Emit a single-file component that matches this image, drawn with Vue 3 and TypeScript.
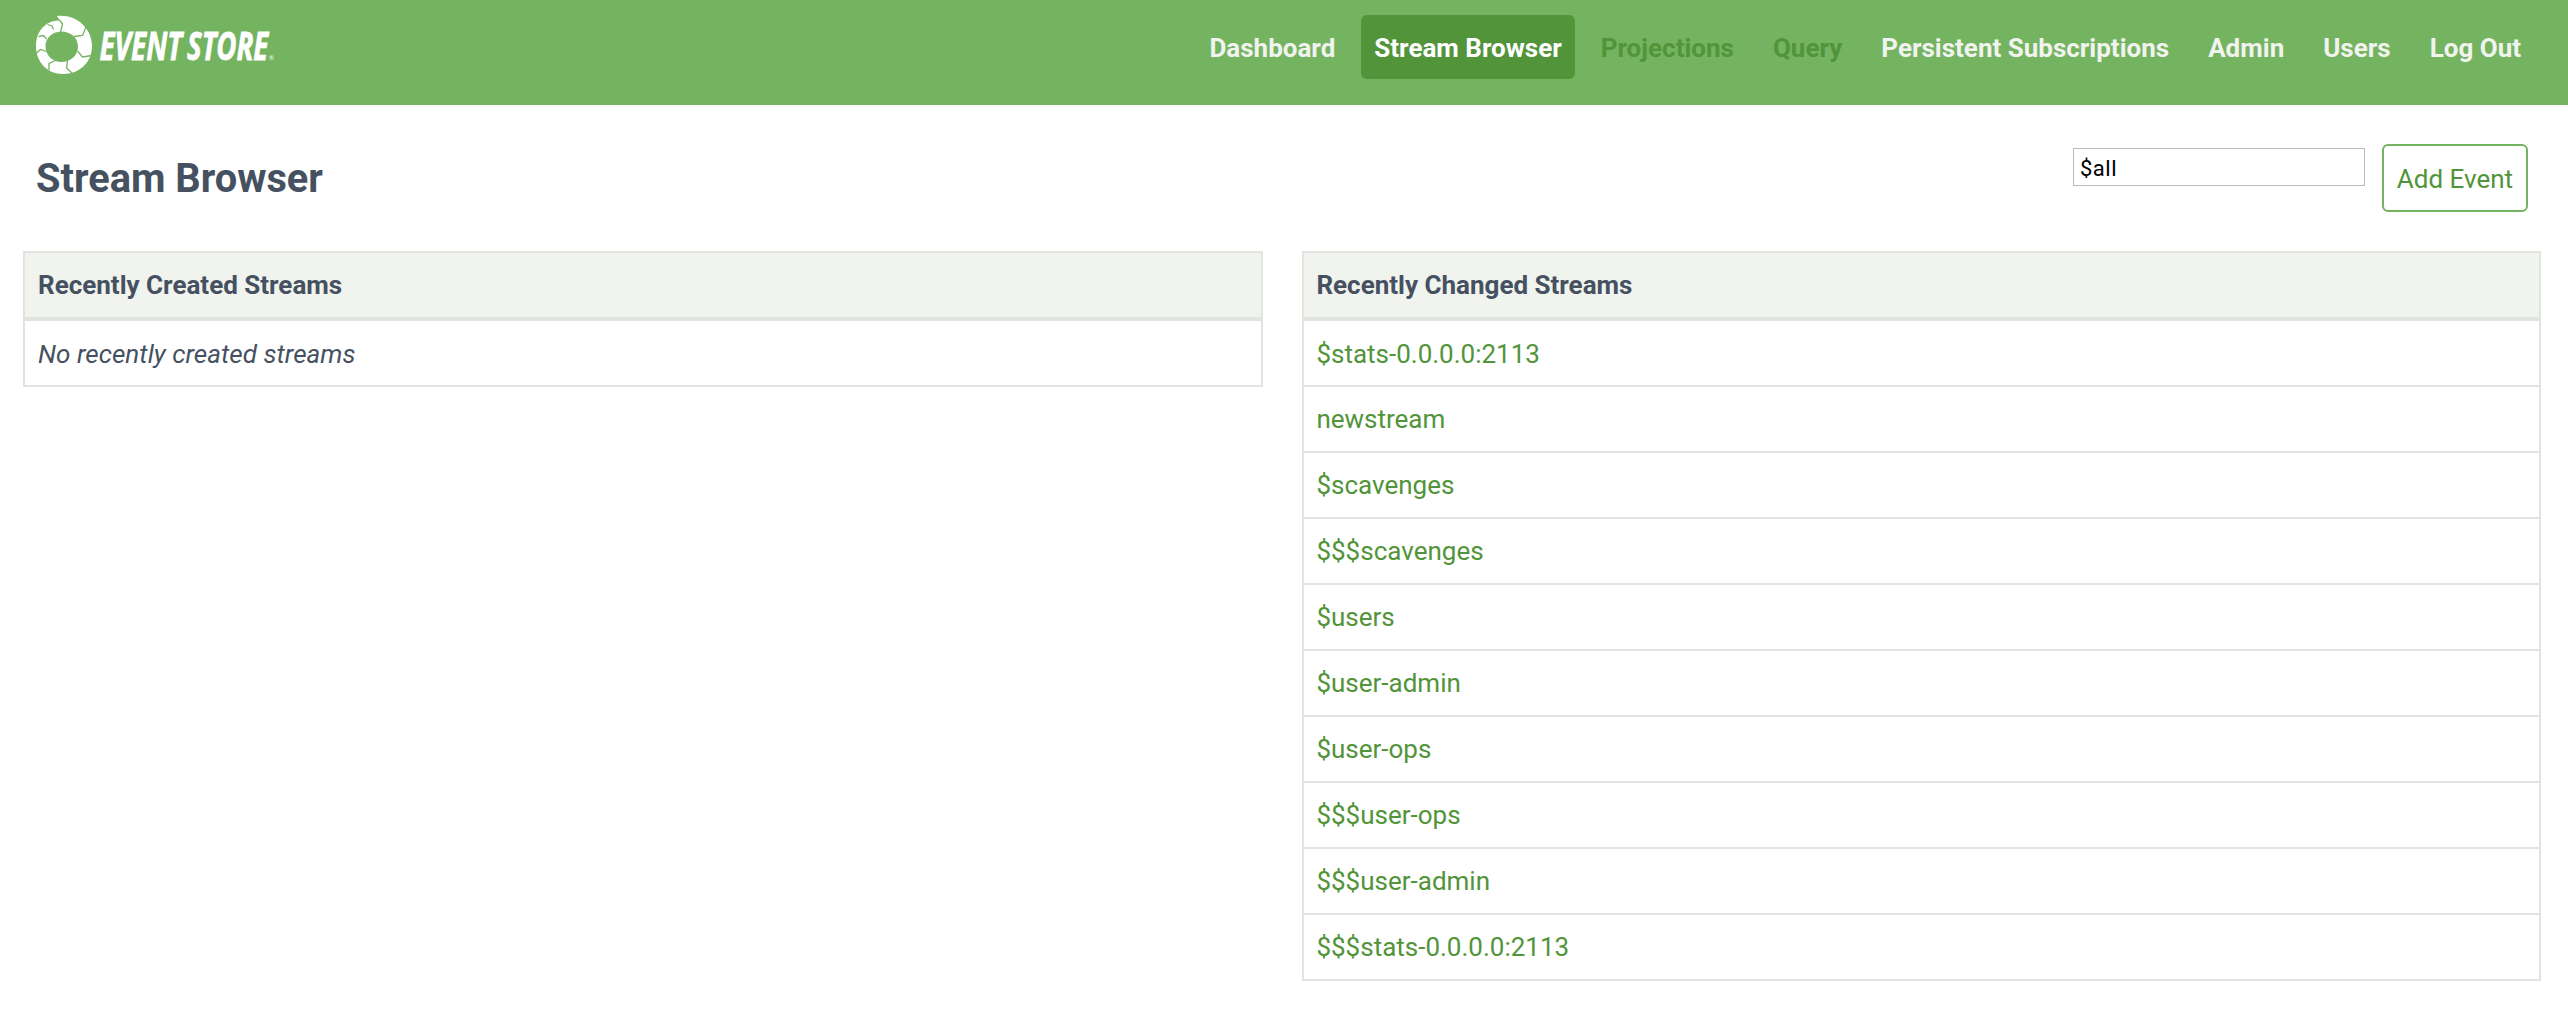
<script setup lang="ts">
interface NavItem {
  label: string
  state?: 'active' | 'disabled'
}

const nav: NavItem[] = [
  { label: 'Dashboard' },
  { label: 'Stream Browser', state: 'active' },
  { label: 'Projections', state: 'disabled' },
  { label: 'Query', state: 'disabled' },
  { label: 'Persistent Subscriptions' },
  { label: 'Admin' },
  { label: 'Users' },
  { label: 'Log Out' },
]

const changed: string[] = [
  '$stats-0.0.0.0:2113',
  'newstream',
  '$scavenges',
  '$$$scavenges',
  '$users',
  '$user-admin',
  '$user-ops',
  '$$$user-ops',
  '$$$user-admin',
  '$$$stats-0.0.0.0:2113',
]
</script>

<template>
  <div class="page">
    <header class="header">
      <svg class="logo" width="250" height="66" viewBox="30 10 250 66" aria-label="Event Store">
        <path
          fill="#fff"
          fill-rule="evenodd"
          d="M57 16 C76 14 92 28 92 46 C92 62 80 74 63 74 C47 74 36 62 36 46 C36 31 46 20 60 20.500 Z M61 31.500 C52 32 45.500 38 45.500 46 C45.500 55 52 62 61.500 62 C71 62 78 55 78 46.500 C78 38 71 31.500 61 31.500 Z"
        />
        <g fill="none" stroke="#74b360" stroke-width="1.300">
          <path d="M59.500 20 L62.500 24 L60.500 32" />
          <path d="M86 27 L82.500 35.500 L74 36.500" />
          <path d="M92 55.500 L82.500 57 L77.500 51" />
          <path d="M72 73 L66.500 68 L67.500 61" />
          <path d="M49 70 L49 63.500 L55.500 60.500" />
          <path d="M36.500 53 L40.500 49.500 L46.500 51.500" />
          <path d="M38.500 36.500 L43.500 35.500 L46.500 39" />
          <path d="M47.500 24.500 L52 26 L53.500 29.500" />
        </g>
        <g class="wordmark">
          <text transform="translate(99.500 60) scale(0.650 1)" textLength="127" lengthAdjust="spacingAndGlyphs">EVENT</text>
          <text transform="translate(187 60) scale(0.650 1)" textLength="125" lengthAdjust="spacingAndGlyphs">STORE</text>
        </g>
        <text class="reg" x="269" y="60">®</text>
      </svg>
      <nav class="nav">
        <a v-for="item in nav" :key="item.label" class="nav-item" :class="item.state">{{ item.label }}</a>
      </nav>
    </header>

    <section class="title-bar">
      <h1>Stream Browser</h1>
      <div class="actions">
        <input class="stream-input" type="text" value="$all" />
        <a class="button">Add Event</a>
      </div>
    </section>

    <main class="columns">
      <section class="panel created">
        <div class="panel-head">Recently Created Streams</div>
        <div class="row empty">No recently created streams</div>
      </section>
      <section class="panel changed">
        <div class="panel-head">Recently Changed Streams</div>
        <a v-for="name in changed" :key="name" class="row">{{ name }}</a>
      </section>
    </main>
  </div>
</template>

<style>
body {
  margin: 0;
  background: #fff;
}
</style>

<style scoped>
.page {
  height: 1018px;
  overflow: hidden;
  box-sizing: border-box;
  font-family: Roboto, sans-serif;
  font-size: 26px;
  color: #455160;
}
.header {
  display: flex;
  justify-content: space-between;
  align-items: flex-start;
  box-sizing: border-box;
  height: 105px;
  padding: 10px 34px 0 30px;
  background: #74b360;
}
.logo {
  display: block;
  overflow: visible;
}
.wordmark {
  font: italic 700 39px "Open Sans", sans-serif;
  fill: #fff;
  stroke: #fff;
  stroke-width: 0.8px;
}
.reg {
  font: 6px "Open Sans", sans-serif;
  fill: #fff;
}
.nav {
  display: flex;
  gap: 13px;
  padding-top: 5px;
}
.nav-item {
  box-sizing: border-box;
  height: 64px;
  padding: 1px 13px 0;
  line-height: 64px;
  font-weight: 700;
  color: #f1f3ee;
  white-space: nowrap;
  border-radius: 6px;
}
.nav-item.active {
  background: #51943a;
  color: #fff;
}
.nav-item.disabled {
  color: #51943a;
}
.title-bar {
  display: flex;
  justify-content: space-between;
  height: 146px;
  padding: 0 40px 0 36px;
}
h1 {
  margin: 47px 0 0;
  font-size: 39.8px;
  line-height: 54px;
  font-weight: 700;
}
.actions {
  display: flex;
  align-items: flex-start;
  padding-top: 39px;
}
.stream-input {
  box-sizing: border-box;
  width: 292px;
  height: 38px;
  margin: 4px 17px 0 0;
  padding: 2px 6px 0;
  border: 1px solid #bbb;
  border-radius: 0;
  font: 22px Roboto, sans-serif;
  letter-spacing: 0.5px;
  color: #000;
  outline: none;
}
.button {
  box-sizing: border-box;
  width: 146px;
  height: 68px;
  padding-top: 1px;
  border: 2px solid #74b360;
  border-radius: 6px;
  line-height: 64px;
  text-align: center;
  color: #51943a;
}
.columns {
  display: flex;
  align-items: flex-start;
  gap: 39px;
  padding: 0 27px 0 23px;
}
.panel {
  box-sizing: border-box;
  border: 2px solid #e2e4df;
  border-bottom: 0;
}
.created {
  width: 1240px;
}
.changed {
  width: 1239px;
}
.panel-head {
  height: 64px;
  padding: 0 13px;
  line-height: 64px;
  font-weight: 700;
  background: #f1f3ee;
  border-bottom: 4px solid #e2e4df;
}
.row {
  display: block;
  height: 64px;
  padding: 0 13px;
  line-height: 64px;
  color: #51943a;
  border-bottom: 2px solid #e2e4df;
}
.changed .panel-head,
.changed .row {
  padding-left: 12.4px;
}
.panel-head + .row {
  line-height: 66px;
}
.row.empty {
  font-style: italic;
  letter-spacing: 0.05px;
  color: #455160;
}
</style>
